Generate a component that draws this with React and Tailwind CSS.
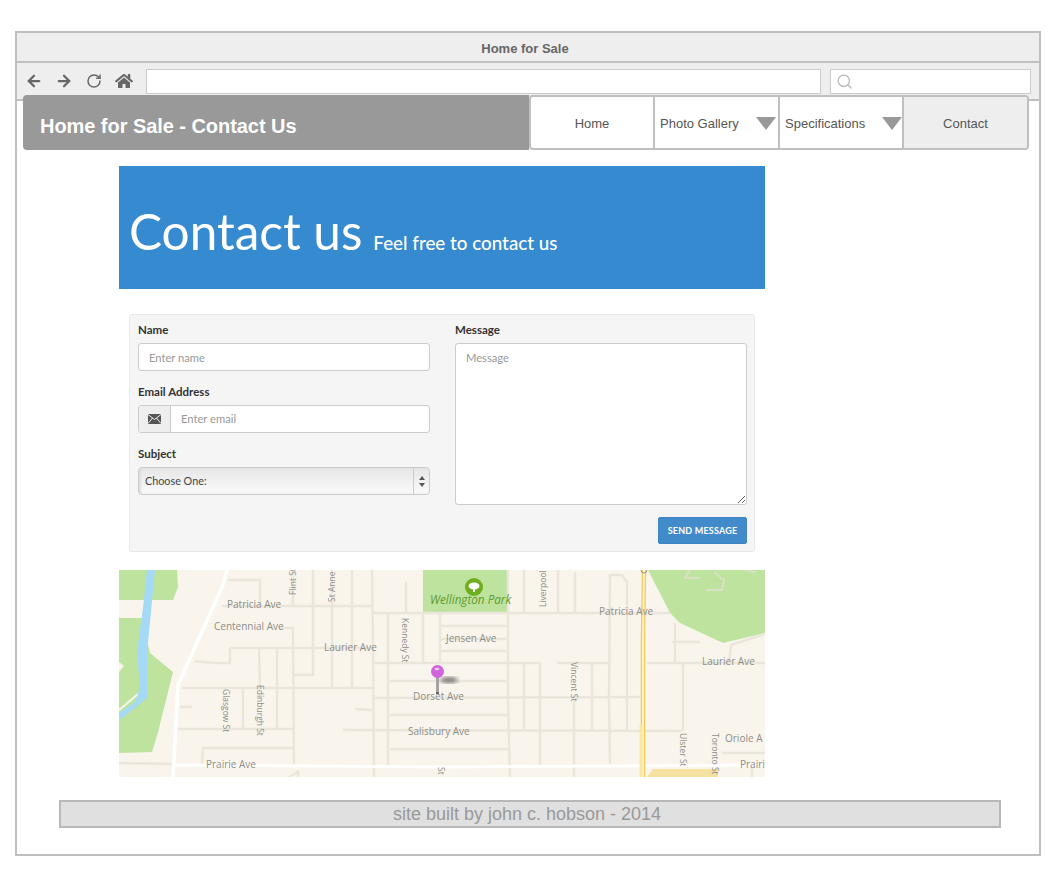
import React from "react";
import { FaHome } from "react-icons/fa";
import { ArrowLeft, ArrowRight, RotateCw, Search } from "lucide-react";

const thin = [
  "228,580 260,580 260,606", "222,606 372,606", "293,570 293,606", "313,570 313,675 293,675", "332,570 332,688", "352,570 352,688",
  "372,570 373,640 374,778", "279,628 293,628 293,640 294,765", "230,648 372,648", "230,648 230,663 213,663 195,661", "259,648 260,688", "277,648 277,730",
  "182,688 372,688", "243,688 243,730", "178,729 293,729", "202,765 203,748 293,748", "119,763 172,764", "180,707 192,707", "355,709 372,710",
  "343,730 682,731", "372,613 670,613", "388,614 388,765", "372,663 540,663", "388,681 508,681", "372,698 640,697", "388,715 508,715", "390,749 508,749",
  "406,582 406,613", "423,613 423,663", "440,613 440,663", "440,626 508,626", "440,639 508,639", "440,651 508,651", "508,570 508,700 510,778",
  "524,570 524,613", "558,570 558,613", "575,572 575,613", "524,663 524,731", "540,663 540,765", "557,663 608,663", "592,663 592,731", "574,698 574,778",
  "610,765 609,700 610,575 622,575 627,582 627,731", "647,663 765,663", "683,663 683,731", "675,623 675,663", "672,642 700,642", "731,645 729,663",
  "722,753 765,753", "752,768 752,778", "731,645 765,634", "299,771 288,778", "298,772 298,778",
];

const parkRoads = ["685,578 690,570", "685,578 700,578", "706,590 722,590 724,580 714,572", "745,570 755,572"];

const labels = [
  ["Patricia Ave", 227, 608], ["Centennial Ave", 214, 630], ["Laurier Ave", 324, 651], ["Jensen Ave", 446, 642], ["Patricia Ave", 599, 615],
  ["Laurier Ave", 702, 665], ["Dorset Ave", 413, 700], ["Salisbury Ave", 408, 735], ["Oriole A", 725, 742], ["Prairie Ave", 206, 768], ["Prairi", 740, 768],
];

const verticalLabels = [
  ["Flint St", 296, 595, -90], ["St Anne St", 335, 602, -90], ["Liverpool St", 546, 607, -90],
  ["Kennedy St", 402, 618, 90], ["Glasgow St", 223, 689, 90], ["Edinburgh St", 257, 685, 90], ["Vincent St", 571, 662, 90], ["Ulster St", 680, 733, 90], ["Toronto St", 712, 733, 90], ["St", 438, 767, 90],
];

function MapDrawing() {
  return (
    <svg viewBox="119 570 646 207" className="block w-[646px] h-[207px]">
      <defs>
        <filter id="pinblur"><feGaussianBlur stdDeviation="2" /></filter>
      </defs>
      <rect x="119" y="570" width="646" height="207" fill="#f9f5ec" />
      <polygon points="119,570 177,570 178,587 173,600 119,600" fill="#bee39f" />
      <polygon points="119,618 142,618 150,653 173,672 158,732 152,752 119,753 119,672 124,666 119,662" fill="#bee39f" />
      <polygon points="423,570 423,613 507,613 507,570" fill="#bee39f" />
      <polygon points="648,570 670,613 680,623 723,643 765,633 765,570" fill="#bee39f" />
      <polyline points="119,710 138,694" fill="none" stroke="#f9f5ec" strokeWidth="2" />
      <polygon points="147,570 155,570 150,622 147,652 147,698 135,708 119,720 119,713 135,702 140,688 137,652 143,608" fill="#a5daf6" />
      <polygon points="647,777 653,769 718,769 718,777" fill="#f6e2a0" />
      <g fill="none" stroke="#ebe6db" strokeWidth="2.5">
        {thin.map((p, i) => <polyline key={i} points={p} />)}
      </g>
      <g fill="none" stroke="#d9e0c4" strokeWidth="2">
        {parkRoads.map((p, i) => <polyline key={i} points={p} />)}
      </g>
      <polyline points="227,570 223,585 178,685 173,778" fill="none" stroke="#ffffff" strokeWidth="3.5" />
      <polyline points="173,765 445,767 610,766 765,765" fill="none" stroke="#ffffff" strokeWidth="3" />
      <polyline points="644,570 643,640 643,778" fill="none" stroke="#f6c95f" strokeWidth="4.5" />
      <polyline points="644,570 643,640 643,778" fill="none" stroke="#fff3c4" strokeWidth="2" />
      <polyline points="641,725 641,778" fill="none" stroke="#fbe6a0" strokeWidth="3" />
      <circle cx="644" cy="570" r="3" fill="none" stroke="#999" strokeWidth="1" />
      <g fontFamily="'Open Sans', sans-serif" fontSize="10" fill="#8d8d88">
        {labels.map(([t, x, y], i) => (
          <text key={i} x={x} y={y}>{t}</text>
        ))}
      </g>
      <g fontFamily="'Open Sans', sans-serif" fontSize="8.5" fill="#8d8d88">
        {verticalLabels.map(([t, x, y, r], i) => (
          <text key={i} x={x} y={y} transform={`rotate(${r} ${x} ${y})`}>{t}</text>
        ))}
      </g>
      <circle cx="474" cy="587" r="9" fill="#6fae1f" />
      <ellipse cx="474" cy="586" rx="5.5" ry="3.5" fill="#ffffff" />
      <rect x="473" y="587" width="2" height="5" fill="#ffffff" />
      <text x="430" y="604" fontFamily="'Open Sans', sans-serif" fontSize="11.7" fontStyle="italic" fontWeight="500" fill="#5f9a2c">Wellington Park</text>
      <ellipse cx="449" cy="680" rx="9" ry="3" fill="#777" filter="url(#pinblur)" />
      <rect x="436" y="676" width="3" height="18" fill="#a3a3a3" />
      <rect x="436" y="692" width="3" height="2" fill="#666" />
      <circle cx="437.5" cy="671.5" r="6.5" fill="#d163dc" />
      <ellipse cx="437" cy="669" rx="2.5" ry="1.2" fill="#f3c9f6" />
    </svg>
  );
}

function Triangle() {
  return (
    <svg width="20" height="13" viewBox="0 0 20 13" className="shrink-0">
      <polygon points="0,0 20,0 10,13" fill="#999999" />
    </svg>
  );
}

const field = "block w-full h-[28px] rounded-[3px] border border-[#ccc] bg-white outline-none text-[11.2px] text-[#555] placeholder:text-[#999]";

export default function App() {
  return (
    <div className="w-[1060px] h-[875px] bg-white pt-[31px] pl-[15px] font-['Liberation_Sans',Arial,sans-serif]">
      <div className="w-[1026px] h-[825px] border-2 border-[#c0c0c0] bg-white">
        <div className="h-[30px] bg-[#eeeeee] border-b-2 border-[#c0c0c0] flex items-center justify-center pr-[6px] pt-[4px] text-[13px] font-bold text-[#666]">
          Home for Sale
        </div>
        <div className="h-[38px] bg-[#eeeeee] border-b-2 border-[#c0c0c0] flex items-start pt-[6px] pl-[8px]">
          <div className="w-[121px] h-[24px] flex items-center text-[#666]">
            <ArrowLeft size={18} strokeWidth={3} />
            <ArrowRight size={18} strokeWidth={3} className="ml-[12px]" />
            <RotateCw size={16} strokeWidth={2.2} className="ml-[13px]" />
            <FaHome size={18} className="ml-[13px]" />
          </div>
          <div className="w-[675px] h-[25px] bg-white border border-[#ccc]" />
          <div className="ml-[9px] w-[201px] h-[25px] bg-white border border-[#ccc] flex items-center pl-[5px]">
            <Search size={17} strokeWidth={2} className="text-[#bbbbbb]" />
          </div>
        </div>

        <div className="relative z-10 -mt-[6px] ml-[6px] w-[1006px] h-[55px] flex">
          <div className="w-[506px] bg-[#999999] rounded-l-[4px] flex items-center pl-[17px] pt-[6px] text-[20px] font-bold tracking-[-0.05px] text-white">
            Home for Sale - Contact Us
          </div>
          <div className="flex-1 flex border-2 border-[#c0c0c0] rounded-[4px] bg-white text-[13px] text-[#555]">
            <div className="w-[124px] flex items-center justify-center pt-[2px] border-r-2 border-[#c0c0c0]">Home</div>
            <div className="w-[125px] flex items-center justify-between pl-[5px] pr-[2px] pt-[2px] border-r-2 border-[#c0c0c0]">
              <span>Photo Gallery</span><Triangle />
            </div>
            <div className="w-[124px] flex items-center justify-between pl-[5px] pt-[2px] border-r-2 border-[#c0c0c0]">
              <span>Specifications</span><Triangle />
            </div>
            <div className="flex-1 flex items-center justify-center pt-[2px] bg-[#eeeeee] rounded-r-[3px]">Contact</div>
          </div>
        </div>

        <div className="ml-[102px] w-[646px] mt-[16px] font-['Lato',sans-serif]">
          <div className="h-[123px] bg-[#368ad0] flex items-baseline pt-[33px] pl-[10px] text-white">
            <span className="text-[49.5px] leading-[64px]">Contact us</span>
            <span className="ml-[11px] text-[18.8px] font-medium">Feel free to contact us</span>
          </div>

          <div className="mt-[25px] mx-[10px] h-[238px] bg-[#f5f5f5] border border-[#e9e9e9] rounded-[3px] pl-[8px] pr-[7px] pt-[8px] grid grid-cols-2 gap-x-[25px] text-[11.5px] text-[#333]">
            <div>
              <div className="font-bold leading-[14px]">Name</div>
              <input className={`${field} mt-[6px] px-[10px]`} placeholder="Enter name" />
              <div className="font-bold leading-[14px] mt-[14px]">Email Address</div>
              <div className="mt-[6px] h-[28px] flex rounded-[3px] border border-[#ccc] bg-white overflow-hidden">
                <div className="w-[32px] bg-[#eeeeee] border-r border-[#ccc] flex items-center justify-center">
                  <svg width="13" height="10" viewBox="0 0 13 10">
                    <rect x="0" y="0" width="13" height="10" fill="#555" />
                    <path d="M0 0.5 L6.5 5.5 L13 0.5 M0 9.5 L4.6 4 M13 9.5 L8.4 4" stroke="#eee" strokeWidth="1" fill="none" />
                  </svg>
                </div>
                <input className="flex-1 min-w-0 px-[10px] outline-none text-[11.2px] placeholder:text-[#999]" placeholder="Enter email" />
              </div>
              <div className="font-bold leading-[14px] mt-[14px]">Subject</div>
              <div className="mt-[6px] h-[28px] flex rounded-[4px] border border-[#ccc] bg-gradient-to-b from-[#e6e6e6] to-[#fbfbfb] shadow-[inset_2px_0_2px_#ddd]">
                <div className="flex-1 flex items-center pl-[6px] text-[10.8px] text-[#444]">Choose One:</div>
                <div className="w-[16px] border-l border-[#ccc] flex items-center justify-center">
                  <svg width="6" height="11" viewBox="0 0 6 11"><path d="M3 0 L6 4 H0 Z M3 11 L0 7 H6 Z" fill="#555" /></svg>
                </div>
              </div>
            </div>
            <div>
              <div className="font-bold leading-[14px]">Message</div>
              <textarea className="block mt-[6px] w-full h-[162px] rounded-[3px] border border-[#ccc] bg-white outline-none text-[11.2px] px-[10px] py-[6px] placeholder:text-[#999]" placeholder="Message" />
              <div className="mt-[12px] flex justify-end">
                <div className="w-[89px] h-[27px] rounded-[2px] bg-[#428bca] border border-[#3f85c3] flex items-center justify-center text-[9px] font-bold tracking-[0.2px] text-white">
                  SEND MESSAGE
                </div>
              </div>
            </div>
          </div>

          <div className="mt-[18px]">
            <MapDrawing />
          </div>
        </div>

        <div className="mt-[23px] ml-[42px] w-[942px] h-[28px] bg-[#e0e0e0] border-2 border-[#b8b8b8] flex items-center justify-center pr-[6px] text-[18px] text-[#999]">
          site built by john c. hobson - 2014
        </div>
      </div>
    </div>
  );
}
